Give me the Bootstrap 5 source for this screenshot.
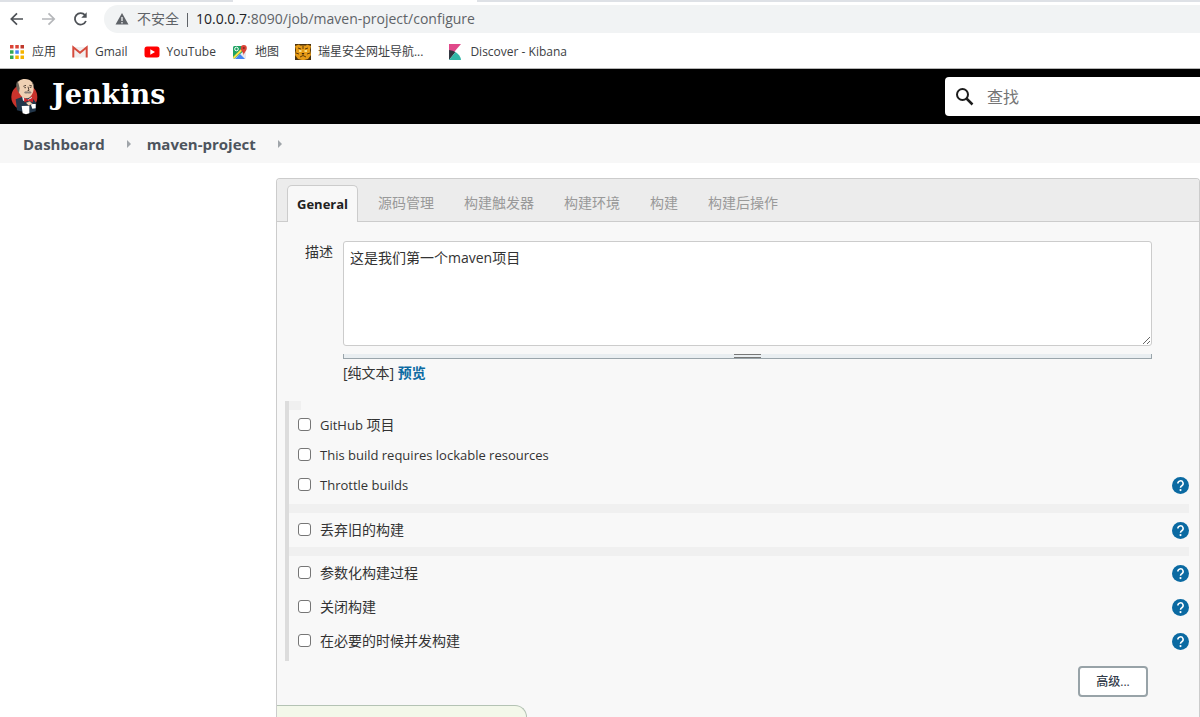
<!DOCTYPE html>
<html lang="zh-CN">
<head>
<meta charset="utf-8">
<meta name="viewport" content="width=device-width, initial-scale=1">
<title>maven-project Config [Jenkins]</title>
<link href="https://cdn.jsdelivr.net/npm/bootstrap@5.3.0/dist/css/bootstrap.min.css" rel="stylesheet">
<style>
  body { font-family: "Open Sans", "Noto Sans CJK SC", sans-serif; font-size: 14px; line-height: 20px; color: #333; background: #fff; overflow-x: hidden; min-height: 100vh; }
  a { text-decoration: none; color: inherit; }
  svg { display: block; flex: none; }
  .latin { font-size: 13px; }

  /* browser chrome */
  .tab-strip { height: 2px; background: #dee1e6; }
  .tab-strip span { display: block; width: 244px; height: 2px; margin-left: 233px; background: #fff; }
  .toolbar { height: 34px; padding: 3px 0 3px 8px; gap: 14px; }
  .tool-btn { border: 0; background: none; padding: 0; width: 18px; height: 18px; }
  .omnibox { height: 28px; background: #f1f3f4; border-radius: 14px 0 0 14px; padding-left: 11px; color: #5f6368; }
  .omnibox .vr { background: #5f6368; opacity: 1; }
  .url b { font-weight: 400; color: #202124; }
  .bookmarks { height: 33px; font-size: 12px; color: #3c4043; padding-left: 9px; border-bottom: 1px solid #b5b5b5; }
  .bookmarks a { gap: 7px; }

  /* Jenkins header */
  .page-top { background: #000; height: 55px; padding-left: 10px; }
  .brand-name { font-family: "DejaVu Serif", serif; font-weight: 700; font-size: 27px; line-height: 30px; color: #fff; padding-bottom: 4px; }
  .search-wrap { width: 255px; height: 39px; background: #fff; border-radius: 4px 0 0 4px; padding-left: 10px; }
  .search-wrap input { border: 0; outline: 0; font-size: 16px; padding: 0; min-width: 0; }
  .search-wrap input::placeholder { color: #757575; opacity: 1; }
  .crumbs { height: 39px; background: #f7f7f7; padding: 1px 0 0 23px; font-size: 15px; font-weight: 700; color: #4d545d; }

  /* configuration form */
  .config { margin: 15px 0 0 276px; border: 1px solid #ccc; border-bottom: 0; border-radius: 4px 4px 0 0; background: #f8f8f8; }
  .config-tabs { background: #ececec; border-bottom: 1px solid #ccc; border-radius: 3px 3px 0 0; padding: 6px 0 0 10px; height: 43px; }
  .config-tabs .nav-link { height: 37px; padding: 8px 15px; color: #999; border: 0; }
  .config-tabs .nav-link.active { padding: 8px 9px; margin-right: 5px; border: 1px solid #ccc; border-bottom: 0; border-radius: 5px 5px 0 0; background: #f8f8f8; color: #222; font-weight: 700; font-size: 13px; }
  .desc { padding: 19px 47px 0 28px; }
  .desc label { width: 38px; padding-top: 1px; }
  .desc textarea { display: block; width: 100%; height: 105px; padding: 6px; border: 1px solid #ccc; border-radius: 3px; color: #333; background: #fff; line-height: 20px; resize: both; }
  .grip { height: 5px; margin-top: 8px; background: #e9eef1; border: 1px solid #9aa5ab; border-top: 0; }
  .grip span { width: 27px; height: 4px; border: 1px solid #777; border-width: 1px 0; }
  .preview { color: #0b6aa2; font-weight: 700; }
  .options { margin: 18px 10px 0 8px; border-left: 4px solid #dcdcdc; padding-bottom: 3px; }
  .stub { width: 12px; height: 9px; background: #f0f0f0; }
  .band { height: 9px; background: #f0f0f0; }
  .opt { height: 34px; padding-left: 9px; }
  .opt.tight { height: 30px; }
  .opt .form-check-input { width: 13px; height: 13px; margin: 0 9px 2px 0; border: 1px solid #767676; border-radius: 3px; }
  .help-btn { border: 0; padding: 0; background: none; }
  .advanced { width: 70px; height: 31px; margin: 5px 51px 0 0; padding: 0; border: 2px solid #98a3a8; border-radius: 4px; background: #fff; color: #333c4a; font-size: 12px; font-weight: 500; }
  .notice { width: 250px; height: 12px; margin-top: 8px; border: 1px solid #b4c3b4; border-width: 1px 1px 0 0; border-radius: 0 12px 0 0; background: #f3f8ea; }
</style>
</head>
<body>
<svg width="0" height="0" class="position-absolute" aria-hidden="true">
  <symbol id="help" viewBox="0 0 24 24"><circle cx="12" cy="12" r="12" fill="#0b6aa2"/><path d="M8.300 9.200a3.700 3.700 0 1 1 5.600 3.100C12.700 13.100 12 13.700 12 15.300" fill="none" stroke="#fff" stroke-width="2.200"/><circle cx="12" cy="18.500" r="1.500" fill="#fff"/></symbol>
</svg>

<div class="tab-strip"><span></span></div>
<div class="toolbar d-flex align-items-center">
  <button class="tool-btn" aria-label="后退"><svg width="18" height="18" viewBox="0 0 18 18" fill="none" stroke="#4d5156" stroke-width="1.700"><path d="M15 9H3.500M9 3.300 3.300 9 9 14.700"/></svg></button>
  <button class="tool-btn" aria-label="前进"><svg width="18" height="18" viewBox="0 0 18 18" fill="none" stroke="#b5b7ba" stroke-width="1.700"><path d="M2 9h12M8.500 3.300 14.200 9 8.500 14.700"/></svg></button>
  <button class="tool-btn" aria-label="刷新"><svg width="18" height="18" viewBox="0 0 18 18" fill="none" stroke="#4d5156" stroke-width="1.800"><path d="M13 5.200A5.700 5.700 0 1 0 13.900 11"/><path d="M14.700 2.300v5.400H9.300z" fill="#4d5156" stroke="none"/></svg></button>
  <div class="omnibox flex-grow-1 d-flex align-items-center">
    <svg width="14" height="14" viewBox="0 0 14 14"><path d="M7 1 13.500 12.500H.5z" fill="#5f6368"/><path d="M7 5v4M7 10v1.500" stroke="#f1f3f4" stroke-width="1.300"/></svg>
    <span class="ms-2">不安全</span><span class="mx-2 vr my-2"></span>
    <span class="url"><b>10.0.0.7</b>:8090/job/maven-project/configure</span>
  </div>
</div>
<nav class="bookmarks d-flex align-items-center" aria-label="书签">
  <a href="#" class="d-flex align-items-center me-3"><svg width="16" height="16" viewBox="0 0 16 16"><path d="M1 1h3.500v3.500H1zM6.300 1h3.500v3.500H6.300z" fill="#db4437"/><path d="M11.500 1H15v3.500h-3.500z" fill="#c0392b"/><path d="M1 6.300h3.500v3.500H1zM1 11.500h3.500V15H1z" fill="#34a853"/><path d="M6.300 6.300h3.500v3.500H6.300z" fill="#4285f4"/><path d="M11.500 6.300H15v3.500h-3.500zM6.300 11.500h3.500V15H6.300zM11.500 11.500H15V15h-3.500z" fill="#f4b400"/></svg>应用</a>
  <a href="#" class="d-flex align-items-center me-3"><svg width="16" height="16" viewBox="0 0 16 16"><path d="M1 3h14v10.500H1z" fill="#f1eeee"/><path d="M1.300 13.500V3.300L8 8.700l6.700-5.400v10.200" fill="none" stroke="#d54b3d" stroke-width="2"/></svg>Gmail</a>
  <a href="#" class="d-flex align-items-center me-3"><svg width="16" height="16" viewBox="0 0 16 16"><rect x=".5" y="2.500" width="15" height="11" rx="2.500" fill="#f00"/><path d="m6.300 5.300 4.700 2.700-4.700 2.700z" fill="#fff"/></svg>YouTube</a>
  <a href="#" class="d-flex align-items-center me-3"><svg width="16" height="16" viewBox="0 0 16 16"><rect x="1" y="2" width="13" height="13" rx="1.500" fill="#e8eaed"/><path d="M1 13V3.500Q1 2 2.500 2H10L13 6 2 15z" fill="#1ea362"/><path d="m3 15 5-5 5 5z" fill="#4285f4"/><path d="m1.500 14 8-8" stroke="#ffe047" stroke-width="2"/><circle cx="4.500" cy="5" r="1.800" fill="none" stroke="#fff"/><path d="M11.800 11.500C11.500 8 8.800 7 8.800 4a3 3 0 0 1 6 0c0 3-2.700 4-3 7.500z" fill="#db4437"/><circle cx="11.800" cy="4" r="1.100" fill="#8c2b20"/></svg>地图</a>
  <a href="#" class="d-flex align-items-center me-4"><svg width="16" height="16" viewBox="0 0 16 16"><path d="M0 0h16v16H0z" fill="#4a3210"/><path d="M0 2 4 .5l1 1h6l1-1L16 2l-1 4 1 5-3 4-4 1H7l-4-1-3-4 1-5z" fill="#e69b17"/><path d="m3 4 3 1M13 4l-3 1M8 2v3M1 9l3 1M15 9l-3 1M5 13l3-1.500 3 1.500" stroke="#5e3b0a" fill="none"/><path d="M4 7h2.500M9.500 7H12" stroke="#fff2a0" stroke-width="1.500"/><path d="M6.500 9h3L8 11z" fill="#3a2107"/></svg>瑞星安全网址导航...</a>
  <a href="#" class="d-flex align-items-center"><svg width="16" height="16" viewBox="0 0 16 16"><path d="M2 0h12L2 14z" fill="#e0498a"/><path d="M2 6q4 .3 6.500 2L2 16z" fill="#343741"/><path d="M8.500 8q5 3 5.500 8H2z" fill="#32b7a7"/></svg>Discover - Kibana</a>
</nav>

<header class="page-top d-flex align-items-center justify-content-between">
  <a href="#" class="d-flex align-items-center">
    <svg width="30" height="38" viewBox="0 0 90 114" class="me-2">
      <circle cx="43" cy="57" r="39" fill="#c9332c"/>
      <path d="M17 64 36 57l30 2 13 16-2 25-22 6-34-9z" fill="#22364a"/>
      <path d="M36 54 51 66l15-10-3 14-24-2z" fill="#f2f2f2"/>
      <path d="M22 24C20 9 31 3 45 3c18 0 27 12 26 29-1 14-9 29-22 29-11 0-20-10-24-22z" fill="#efd0b3"/>
      <path d="M23 9C17 15 18 25 21 35l6 10 2-14-3-13zM64 8c6 6 9 13 8 22l-4-11z" fill="#6b6258"/>
      <path d="m40 25 8-3M58 22l8 2M43 29h5M59 28h5M54 26l3 11-5 2" fill="none" stroke="#352620" stroke-width="2.500"/>
      <path d="M42 44q5-7 11-2 7-5 12 2-6 4-12 2-6 2-11-2z" fill="#8b8179"/>
      <path d="m42 59 12 6 15-6v14l-14-5-12 5z" fill="#d2232a"/>
      <path d="m35 84 23-1v23l-10 3-10-3z" fill="#fff"/>
      <path d="M62 78h15v13l-10 1z" fill="#fff"/><path d="m47 74 12-4 9 7-12 6z" fill="#efd0b3" stroke="#352620"/>
    </svg>
    <span class="brand-name ms-1">Jenkins</span>
  </a>
  <div class="search-wrap d-flex align-items-center">
    <svg width="20" height="20" viewBox="0 0 20 20" fill="none" stroke="#1c1c1c"><circle cx="7.500" cy="7.500" r="5.500" stroke-width="2"/><path d="m11.500 11.500 6 6" stroke-width="2.500"/></svg>
    <input class="flex-grow-1 ms-2 ps-1" type="search" placeholder="查找" aria-label="查找">
  </div>
</header>
<nav class="crumbs d-flex align-items-center" aria-label="breadcrumb">
  <a href="#">Dashboard</a>
  <svg width="42" height="10" viewBox="0 0 42 10"><path d="m22 1 4 4-4 4z" fill="#a0a5aa"/></svg>
  <a href="#">maven-project</a>
  <svg width="42" height="10" viewBox="0 0 42 10"><path d="m22 1 4 4-4 4z" fill="#a0a5aa"/></svg>
</nav>

<main class="config">
  <nav class="config-tabs nav flex-nowrap">
    <a class="nav-link active" href="#">General</a>
    <a class="nav-link" href="#">源码管理</a>
    <a class="nav-link" href="#">构建触发器</a>
    <a class="nav-link" href="#">构建环境</a>
    <a class="nav-link" href="#">构建</a>
    <a class="nav-link" href="#">构建后操作</a>
  </nav>
  <form>
    <div class="desc d-flex">
      <label for="description" class="flex-shrink-0">描述</label>
      <div class="flex-grow-1">
        <textarea id="description">这是我们第一个maven项目</textarea>
        <div class="grip d-flex justify-content-center"><span></span></div>
        <div class="mt-1">[纯文本] <a href="#" class="preview">预览</a></div>
      </div>
    </div>

    <div class="options">
      <div class="stub"></div>
      <div class="opt tight d-flex align-items-center"><input class="form-check-input" type="checkbox" id="o1"><label for="o1"><span class="latin">GitHub</span> 项目</label></div>
      <div class="opt tight d-flex align-items-center"><input class="form-check-input" type="checkbox" id="o2"><label class="latin" for="o2">This build requires lockable resources</label></div>
      <div class="opt tight d-flex align-items-center mb-1"><input class="form-check-input" type="checkbox" id="o3"><label class="latin" for="o3">Throttle builds</label><button type="button" class="help-btn ms-auto" aria-label="帮助"><svg width="17" height="17"><use href="#help"/></svg></button></div>
      <div class="band"></div>
      <div class="opt d-flex align-items-center"><input class="form-check-input" type="checkbox" id="o4"><label for="o4">丢弃旧的构建</label><button type="button" class="help-btn ms-auto" aria-label="帮助"><svg width="17" height="17"><use href="#help"/></svg></button></div>
      <div class="band"></div>
      <div class="opt d-flex align-items-center"><input class="form-check-input" type="checkbox" id="o5"><label for="o5">参数化构建过程</label><button type="button" class="help-btn ms-auto" aria-label="帮助"><svg width="17" height="17"><use href="#help"/></svg></button></div>
      <div class="opt d-flex align-items-center"><input class="form-check-input" type="checkbox" id="o6"><label for="o6">关闭构建</label><button type="button" class="help-btn ms-auto" aria-label="帮助"><svg width="17" height="17"><use href="#help"/></svg></button></div>
      <div class="opt d-flex align-items-center"><input class="form-check-input" type="checkbox" id="o7"><label for="o7">在必要的时候并发构建</label><button type="button" class="help-btn ms-auto" aria-label="帮助"><svg width="17" height="17"><use href="#help"/></svg></button></div>
    </div>
    <div class="d-flex justify-content-end"><button type="button" class="btn advanced">高级...</button></div>
    <div class="notice"></div>
  </form>
</main>
<script src="https://cdn.jsdelivr.net/npm/bootstrap@5.3.0/dist/js/bootstrap.bundle.min.js"></script>
</body>
</html>
